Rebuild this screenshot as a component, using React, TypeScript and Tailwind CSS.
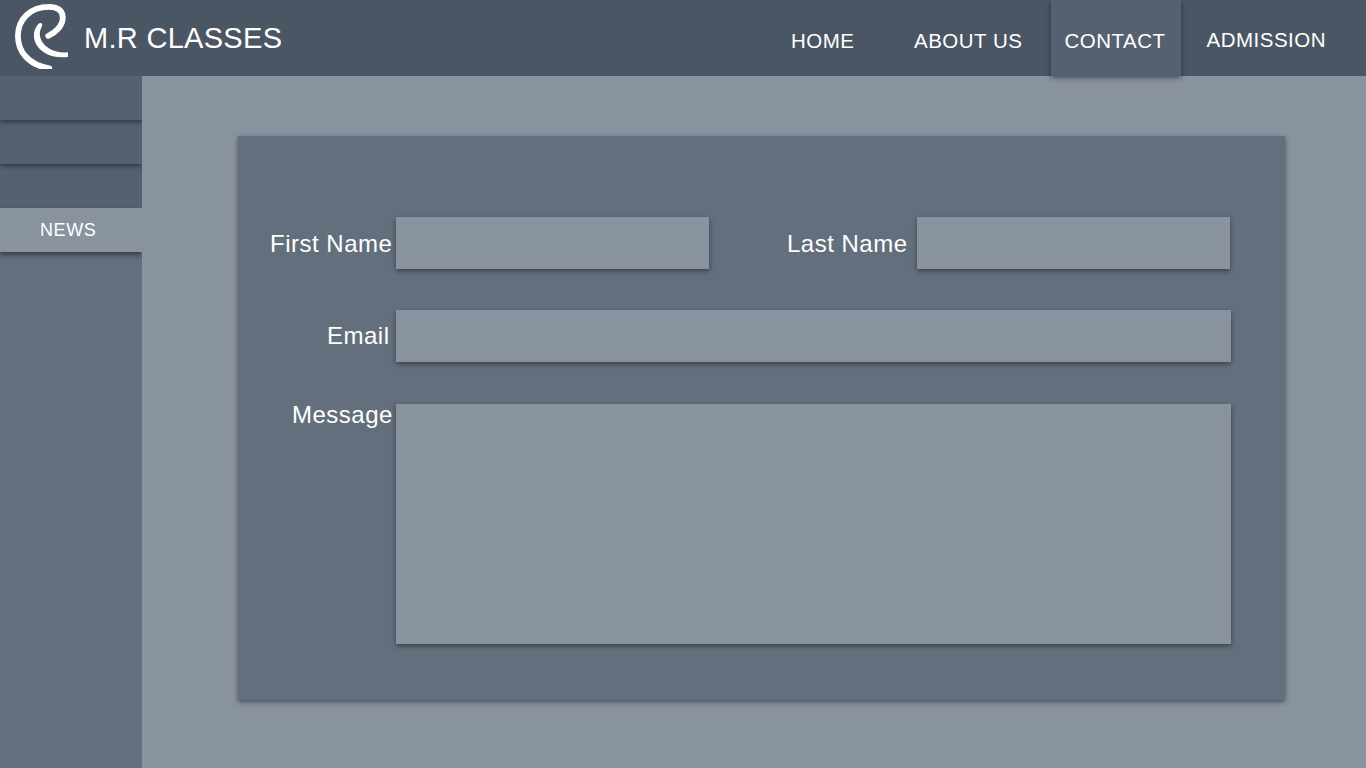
const raised = 'shadow-[0_2px_5px_rgba(0,0,0,0.45)]';
const field = 'block appearance-none rounded-none border-0 bg-[#89929f] p-2 text-white outline-none ' + raised;
const label = 'shrink-0 whitespace-nowrap text-[24px] leading-[28px] tracking-[0.5px] text-white';

function Logo() {
  return (
    <svg className="block shrink-0" width="90" height="76" viewBox="0 0 90 76" fill="none" stroke="#fff" aria-hidden="true">
      <defs>
        <clipPath id="logo-clip">
          <rect x="14" y="3" width="54" height="66" />
        </clipPath>
      </defs>
      <g clipPath="url(#logo-clip)" strokeLinecap="round">
        <path strokeWidth="5.8" d="M48.3 35.8C56 32.5 62.8 25.5 62.8 17.5C62.8 10 57 6.8 49 6.8C30.5 6.8 17.9 19 17.9 36C17.9 51 28 65 49.3 68.3" />
        <path stroke="none" fill="#fff" d="M38.4 24C35.3 27.3 33.8 31.3 33.9 35.8C34.2 48 47 59.5 68 56.9V52.2C55 53.8 42.2 47 40 36.5C39.4 32.5 40.2 29.7 41.8 26.8C43.4 24.1 40.6 21.8 38.4 24Z" />
      </g>
    </svg>
  );
}

function Header() {
  return (
    <header className="flex h-[76px] bg-[#4b5664] text-white">
      <div className="flex w-[791px] shrink-0">
        <Logo />
        <h1 className="-ml-1.5 pt-[21px] text-[29px] leading-[34px] tracking-[0.3px] whitespace-nowrap">M.R CLASSES</h1>
      </div>
      <nav className="flex text-[20.5px] leading-[24px] tracking-[0.5px] whitespace-nowrap">
        <a href="#home" className="w-[123px] pt-[29px]">HOME</a>
        <a href="#about" className="w-[137px] pt-[29px]">ABOUT US</a>
        <a href="#contact" className={'relative z-10 w-[130px] bg-[#556171] pt-[29px] pl-[13.5px] ' + raised}>CONTACT</a>
        <a href="#admission" className="pt-[28px] pl-[25.5px]">ADMISSION</a>
      </nav>
    </header>
  );
}

function Sidebar() {
  return (
    <aside className="flex w-[142px] shrink-0 flex-col overflow-hidden bg-[#646f7d]">
      <div className={'relative z-30 h-11 shrink-0 bg-[#556171] ' + raised} />
      <div className={'relative z-20 h-11 shrink-0 bg-[#556171] ' + raised} />
      <div className="h-11 shrink-0 bg-[#556171]" />
      <a
        href="#news"
        className="flex h-11 shrink-0 items-center bg-[#89929f] pl-10 text-[18px] tracking-[0.6px] text-white shadow-[0_3px_5px_rgba(0,0,0,0.45)]"
      >
        NEWS
      </a>
    </aside>
  );
}

export default function App() {
  return (
    <div className="flex h-screen min-h-[768px] w-full flex-col overflow-hidden bg-[#89929f] font-['Liberation_Sans',Arial,sans-serif]">
      <Header />
      <div className="flex min-h-0 flex-1">
        <Sidebar />
        <main className="pt-[60px] pl-24">
          <form className={'flex h-[564px] w-[1047px] flex-col bg-[#646f7d] pt-[81px] ' + raised}>
            <div className="flex h-[52px]">
              <label htmlFor="first" className={label + ' w-[158px] pt-[13px] pl-8'}>First Name</label>
              <input id="first" className={field + ' h-[52px] w-[313px]'} />
              <label htmlFor="last" className={label + ' w-[208px] pt-[13px] pl-[78px]'}>Last Name</label>
              <input id="last" className={field + ' h-[52px] w-[313px]'} />
            </div>
            <div className="mt-[41px] flex h-[52px]">
              <label htmlFor="email" className={label + ' w-[158px] pt-[12px] pl-[89px]'}>Email</label>
              <input id="email" className={field + ' h-[52px] w-[835px]'} />
            </div>
            <div className="mt-[42px] flex h-[240px]">
              <label htmlFor="message" className={label + ' -mt-[3px] w-[158px] pl-[54px]'}>Message</label>
              <textarea id="message" className={field + ' h-[240px] w-[835px] resize-none'} />
            </div>
          </form>
        </main>
      </div>
    </div>
  );
}
